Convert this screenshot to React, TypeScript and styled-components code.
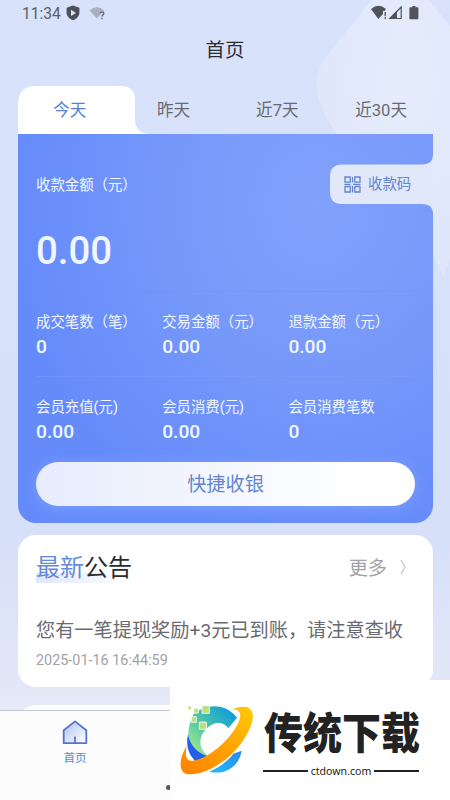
import React from 'react';
import styled, { createGlobalStyle } from 'styled-components';

const GlobalStyle = createGlobalStyle`
  * { box-sizing: border-box; }
  html, body { margin: 0; padding: 0; overflow: hidden; }
  body { font-family: Roboto, "Noto Sans CJK SC", sans-serif; }
  svg { display: block; }
`;

const Screen = styled.main`
  position: relative;
  display: flex;
  flex-direction: column;
  width: 450px;
  height: 800px;
  overflow: hidden;
  background: linear-gradient(180deg, #d8e2fa 0%, #d7e0f9 68%, #e5e9f7 89%, #e7eaf6 100%);
`;

const Backdrop = styled.svg`
  position: absolute;
  top: 0;
  right: 0;
`;

const Content = styled.div`
  position: relative;
  display: flex;
  flex-direction: column;
  flex: 1;
  min-height: 0;
  padding: 0 17px 0 18px;
`;

const StatusBar = styled.header`
  position: relative;
  display: flex;
  align-items: center;
  height: 26px;
  padding: 0 30px 0 22px;
  color: #5c5f67;
`;

const Clock = styled.span`
  width: 44px;
  padding-top: 1px;
  font-size: 15.6px;
  line-height: 26px;
`;

const StatusGroup = styled.div<{ $end?: boolean }>`
  display: flex;
  align-items: center;
  gap: ${(p) => (p.$end ? '0' : '9px')};
  margin-left: ${(p) => (p.$end ? 'auto' : '0')};
`;

const Title = styled.h1`
  position: relative;
  margin: 0;
  height: 60px;
  color: #2c2e34;
  font-size: 19.4px;
  font-weight: 400;
  line-height: 49px;
  text-align: center;
`;

const Tabs = styled.nav`
  position: relative;
  display: grid;
  grid-template-columns: repeat(4, 1fr);
  flex: none;
  height: 48px;
`;

const TabShape = styled.svg`
  position: absolute;
  top: 0;
  left: 0;
`;

const Tab = styled.span<{ $active?: boolean }>`
  position: relative;
  color: ${(p) => (p.$active ? '#5582d8' : '#696a71')};
  font-size: 16.6px;
  line-height: 50px;
  text-align: center;
`;

const Summary = styled.section`
  position: relative;
  flex: none;
  display: flex;
  flex-direction: column;
  height: 389px;
  padding: 0 18px;
  border-radius: 0 0 18px 18px;
  color: #f0f6ff;
  background:
    radial-gradient(ellipse 310px 350px at 300px 70px, #82a1fc 0%, #7799fa 45%, rgba(105, 142, 250, 0) 100%),
    #658bfb;
`;

const CodeShape = styled.svg`
  position: absolute;
  top: 20px;
  right: 0;
`;

const SummaryHead = styled.div`
  display: flex;
  align-items: center;
  justify-content: space-between;
  height: 40px;
  margin-top: 32px;
`;

const Label = styled.span`
  font-size: 14.4px;
  line-height: 20px;
  white-space: nowrap;
`;

const CodeButton = styled.span`
  position: relative;
  display: flex;
  align-items: center;
  gap: 7px;
  width: 71px;
  margin-top: -3px;
  color: #6385d2;
  white-space: nowrap;
`;

const Amount = styled.strong`
  height: 86px;
  padding-top: 22px;
  border-bottom: 1px solid rgba(100, 145, 255, 0.3);
  font-size: 38.4px;
  font-weight: 500;
  line-height: 46px;
`;

const StatRow = styled.div<{ $divided?: boolean }>`
  display: grid;
  grid-template-columns: repeat(3, 126.2px);
  height: 85px;
  padding-top: 21px;
  border-bottom: 1px solid ${(p) => (p.$divided ? 'rgba(145, 175, 255, 0.2)' : 'transparent')};
`;

const Stat = styled.div`
  display: flex;
  flex-direction: column;
`;

const Value = styled.strong`
  margin-top: 2px;
  font-size: 19.2px;
  font-weight: 500;
  line-height: 24px;
`;

const CashButton = styled.button`
  height: 44px;
  border: 0;
  border-radius: 22px;
  background: linear-gradient(90deg, #e7ecfd, #ffffff 85%);
  box-shadow: 0 2px 14px rgba(145, 175, 255, 0.55);
  color: #6486d2;
  font: 400 19.2px/43px Roboto, "Noto Sans CJK SC", sans-serif;
  padding: 0;
`;

const Notice = styled.section`
  flex: none;
  height: 152px;
  margin-top: 12px;
  padding: 17px 18px 0;
  border-radius: 18px;
  background: #fff;
`;

const NoticeHead = styled.div`
  display: flex;
  align-items: center;
  justify-content: space-between;
  height: 32px;
`;

const Heading = styled.h2`
  margin: 0;
  color: #2b2c30;
  font-size: 24px;
  font-weight: 400;
  line-height: 34px;
`;

const Accent = styled.span`
  color: #6489da;
  background: linear-gradient(90deg, #e1e8fc, #f8f9ff) 0 100% / 76px 10px no-repeat;
`;

const HeadingAccent = styled.span`
  display: inline-block;
  width: 48px;
  height: 32px;
  ${Accent} { display: inline-block; width: 76px; height: 32px; }
`;

const HeadingRest = styled.span`
  position: relative;
`;

const More = styled.span`
  display: flex;
  align-items: center;
  gap: 12px;
  margin-top: -2px;
  padding-right: 8px;
  color: #a1a2a6;
  font-size: 19.2px;
`;

const NoticeText = styled.p`
  margin: 33px 0 0;
  color: #696a6f;
  font-size: 19.2px;
  line-height: 28px;
  white-space: nowrap;
`;

const Time = styled.time`
  display: block;
  margin-top: 6px;
  color: #a1a2a6;
  font-size: 14.4px;
  line-height: 20px;
`;

const NextCard = styled.div`
  flex: none;
  height: 60px;
  margin-top: 18px;
  border-radius: 18px;
  background: #fff;
`;

const BottomNav = styled.footer`
  position: relative;
  flex: none;
  display: flex;
  height: 90px;
  border-top: 1px solid #c5c8d1;
  background: #fcfcfd;
`;

const NavItem = styled.div`
  display: flex;
  flex-direction: column;
  align-items: center;
  width: 150px;
  padding-top: 8px;
  color: #5589da;
  font-size: 11.6px;
  line-height: 18px;
`;

const NavLabel = styled.span`
  margin-top: 4px;
`;

const PageDot = styled.i`
  position: absolute;
  left: 166px;
  top: 74px;
  width: 5px;
  height: 5px;
  border-radius: 50%;
  background: #555;
`;

const Brand = styled.aside`
  position: absolute;
  right: 0;
  bottom: 0;
  display: flex;
  width: 280px;
  height: 120px;
  padding: 24px 0 0 8px;
  background: #fff;
`;

const BrandCopy = styled.div`
  display: flex;
  flex-direction: column;
  width: 158px;
  margin-left: 6px;
`;

const BrandName = styled.span`
  height: 60px;
  color: #222;
  font-size: 39px;
  font-weight: 900;
  line-height: 60px;
  white-space: nowrap;
  transform: scaleY(1.12);
`;

const BrandSite = styled.span`
  display: flex;
  align-items: center;
  gap: 3px;
  width: 156px;
  height: 14px;
  margin-left: -1px;
  color: #222;
  font: 10.6px/14px "Noto Sans", sans-serif;
  &::before, &::after {
    content: '';
    flex: 1;
    height: 2px;
    background: #222;
  }
`;

const primaryStats = [
  ['成交笔数（笔）', '0'],
  ['交易金额（元）', '0.00'],
  ['退款金额（元）', '0.00'],
];

const memberStats = [
  ['会员充值(元)', '0.00'],
  ['会员消费(元)', '0.00'],
  ['会员消费笔数', '0'],
];

const Stats = ({ items, divided }: { items: string[][]; divided?: boolean }) => (
  <StatRow $divided={divided}>
    {items.map(([label, value]) => (
      <Stat key={label}>
        <Label>{label}</Label>
        <Value>{value}</Value>
      </Stat>
    ))}
  </StatRow>
);

const ShieldIcon = () => (
  <svg width="14" height="16" viewBox="0 0 14 16">
    <path d="M7 .6 13.400 2.800v5c0 3.400-2.900 6.200-6.400 7.500-3.500-1.300-6.400-4.100-6.400-7.500v-5Z" fill="#4b4f57" />
    <path d="M5 4.800 10 7.900 5 11Z" fill="#dbe4fa" />
  </svg>
);

const UnknownWifiIcon = () => (
  <svg width="17" height="15" viewBox="0 0 17 15">
    <path d="M.5 4.500Q8-2 15 4.500L8 12.500Z" fill="#a9afbd" />
    <path d="M11 7.600q0-1.800 1.900-1.800t1.900 1.700c0 1.400-1.900 1.500-1.900 3M12.900 11.800v1.400" fill="none" stroke="#c9d1e6" strokeWidth="2" />
    <path d="M11 7.600q0-1.800 1.900-1.800t1.900 1.700c0 1.400-1.900 1.500-1.900 3M12.900 11.800v1.400" fill="none" stroke="#5c606a" strokeWidth="1.200" />
  </svg>
);

const SignalIcons = () => (
  <svg width="50" height="16" viewBox="0 0 50 16">
    <path d="M1 4Q8.500-2.400 16 4L14.500 6H13v3L8.300 14Z" fill="#50535a" />
    <path d="M15.200 7v4.200M15.200 12.300v1.600" stroke="#50535a" strokeWidth="1.300" />
    <path d="M19.800 13.500 31.200 2v11.500Z" fill="none" stroke="#50535a" strokeWidth="1.200" />
    <path d="M19 14 27 6v8Z" fill="#50535a" />
    <path d="M40.200 2.200h2.200V1h3v1.200h2.200q.8 0 .8.8v10.500q0 .8-.8.800h-7.400q-.8 0-.8-.8V3q0-.8.800-.8Z" fill="#50535a" />
  </svg>
);

const QrIcon = () => (
  <svg width="17" height="17" viewBox="0 0 17 17" fill="none" stroke="#6283d0" strokeWidth="1.300">
    <path d="M1 1h5.200v5.200H1ZM1 10.500h5.200V16H1ZM10.800 1H16v5.200h-5.200ZM8.500 1v5.500M.5 8.300h6M9 8.300h7.500M8.500 10v6.500M10.800 10.500V16H16v-5.500h-5.200" />
  </svg>
);

const HouseIcon = () => (
  <svg width="26" height="26" viewBox="0 0 26 26">
    <defs>
      <linearGradient id="house" x2="1" y2="1">
        <stop stopColor="#b1c1f3" />
        <stop offset="1" stopColor="#fff" />
      </linearGradient>
    </defs>
    <path d="M1.700 11.200 13 2.400l11.300 8.800v13H1.700Z" fill="url(#house)" stroke="#5574cb" strokeWidth="1.800" strokeLinejoin="round" />
    <path d="M13 24v-6.500" stroke="#5574cb" strokeWidth="1.800" />
  </svg>
);

const BrandLogo = () => (
  <svg width="80" height="76" viewBox="39 87 240 228">
    <defs>
      <linearGradient id="cyan" gradientUnits="userSpaceOnUse" x1="85" y1="225" x2="205" y2="110">
        <stop stopColor="#9ae98e" />
        <stop offset=".4" stopColor="#55c8a5" />
        <stop offset="1" stopColor="#0b9ddb" />
      </linearGradient>
      <linearGradient id="gold" x1="0" y1="1" x2="1" y2="0">
        <stop stopColor="#ff8300" />
        <stop offset=".5" stopColor="#ffa000" />
        <stop offset="1" stopColor="#ffcb08" />
      </linearGradient>
      <linearGradient id="azure" x1="0" y1="1" x2="1" y2="0">
        <stop stopColor="#21bdf9" />
        <stop offset="1" stopColor="#2d86f4" />
      </linearGradient>
    </defs>
    <path d="M84 120C120 83 184 84 216 128L190 160C175 139 147 138 124 161 99 186 98 221 133 246L110 258C70 235 57 175 84 120Z" fill="url(#cyan)" />
    <path d="M69 178C75 211 98 237 133 245L99 265C75 248 60 216 69 178Z" fill="#245eea" />
    <path d="M133 290C166 276 190 256 205 236L230 227C222 275 180 302 133 290Z" fill="url(#azure)" />
    <path d="M65 213C44 245 39 286 62 296 105 307 186 267 234 197 270 144 276 96 236 95 223 95 210 98 199 104 227 102 234 118 216 151 190 199 132 249 86 257 61 261 60 239 65 213Z" fill="url(#gold)" />
    <path d="M111 92h22v23h-22ZM86 100h14v14H86ZM69 93h10v11H69ZM79 125h15v17H79ZM103 141h21v22h-21Z" fill="#b9df81" stroke="#fff" strokeWidth="2.500" />
  </svg>
);

export default function App() {
  return (
    <>
      <GlobalStyle />
      <Screen>
        <Backdrop width="150" height="320" viewBox="0 0 150 320">
          <defs>
            <radialGradient id="haze" cx=".68" cy=".3" r=".65">
              <stop stopColor="#e5ecfb" />
              <stop offset="1" stopColor="#e0e7fa" />
            </radialGradient>
          </defs>
          <path d="M71 0 24 60Q10 79 22 108 32 132 58 160L105 205 143 275 150 260V26L129 0Z" fill="url(#haze)" />
        </Backdrop>
        <StatusBar>
          <Clock>11:34</Clock>
          <StatusGroup>
            <ShieldIcon />
            <UnknownWifiIcon />
          </StatusGroup>
          <StatusGroup $end>
            <SignalIcons />
          </StatusGroup>
        </StatusBar>
        <Title>首页</Title>
        <Content>
          <Tabs>
            <TabShape width="132" height="48" viewBox="0 0 132 48">
              <path d="M0 48V18Q0 0 18 0H103Q117 0 117 14V33Q117 47 131 48Z" fill="#fff" />
            </TabShape>
            <Tab $active>今天</Tab>
            <Tab>昨天</Tab>
            <Tab>近7天</Tab>
            <Tab>近30天</Tab>
          </Tabs>
          <Summary>
            <CodeShape width="103" height="60" viewBox="0 0 103 60">
              <path d="M103 0Q103 10.500 92 10.500H12Q0 10.500 0 22.500V38Q0 50 12 50H92Q103 50 103 60Z" fill="#e0e8fa" />
            </CodeShape>
            <SummaryHead>
              <Label>收款金额（元）</Label>
              <CodeButton>
                <QrIcon />
                <Label>收款码</Label>
              </CodeButton>
            </SummaryHead>
            <Amount>0.00</Amount>
            <Stats items={primaryStats} divided />
            <Stats items={memberStats} />
            <CashButton>快捷收银</CashButton>
          </Summary>
          <Notice>
            <NoticeHead>
              <Heading>
                <HeadingAccent><Accent>最新</Accent></HeadingAccent>
                <HeadingRest>公告</HeadingRest>
              </Heading>
              <More>
                更多
                <svg width="8" height="16" viewBox="0 0 8 16" fill="none" stroke="#c5c6ca" strokeWidth="1.300">
                  <path d="m2 1 4 7-4 7" />
                </svg>
              </More>
            </NoticeHead>
            <NoticeText>您有一笔提现奖励+3元已到账，请注意查收</NoticeText>
            <Time>2025-01-16 16:44:59</Time>
          </Notice>
          <NextCard />
        </Content>
        <BottomNav>
          <NavItem>
            <HouseIcon />
            <NavLabel>首页</NavLabel>
          </NavItem>
          <PageDot />
        </BottomNav>
        <Brand>
          <BrandLogo />
          <BrandCopy>
            <BrandName>传统下载</BrandName>
            <BrandSite>ctdown.com</BrandSite>
          </BrandCopy>
        </Brand>
      </Screen>
    </>
  );
}
